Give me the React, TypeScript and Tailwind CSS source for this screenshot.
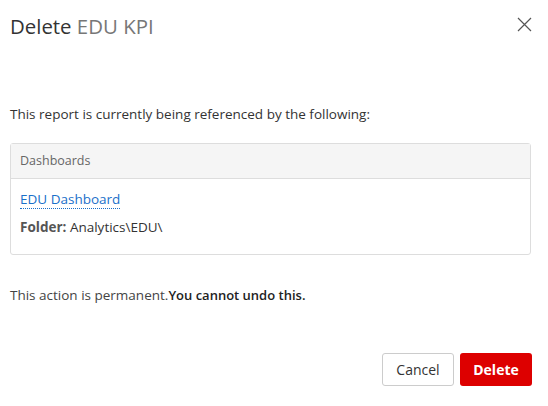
import React from 'react';

export default function App() {
  return (
    <div
      className="w-[548px] h-[406px] bg-white text-[#333] flex flex-col"
      style={{ fontFamily: '"Open Sans", sans-serif' }}
    >
      <div className="flex items-start justify-between pl-[10px] pr-[16px] pt-[12px]">
        <h2 className="text-[20.4px] leading-[28px] font-normal text-[#333]">
          Delete <span className="text-[#777]">EDU KPI</span>
        </h2>
        <button className="mt-[5px] text-[#555]" aria-label="Close">
          <svg width="15" height="15" viewBox="0 0 15 15" fill="none" stroke="currentColor" strokeWidth="1.2">
            <path d="M1 1L14 14M14 1L1 14" />
          </svg>
        </button>
      </div>

      <div className="pl-[10px] pr-[17px] mt-[64px]">
        <p className="text-[13.5px] leading-[20px] text-[#333]">
          This report is currently being referenced by the following:
        </p>

        <div className="mt-[19px] border border-[#ddd] rounded-[3px]">
          <div className="h-[35px] bg-[#f5f5f5] border-b border-[#ddd] px-[9px] flex items-center text-[12.5px] text-[#666]">
            Dashboards
          </div>
          <div className="px-[9px] pt-[10px] pb-[17px] text-[13.5px]">
            <a
              href="#"
              className="text-[#1a6fc9] leading-[20px] border-b border-dotted border-[#1a6fc9]"
            >
              EDU Dashboard
            </a>
            <div className="mt-[8px] leading-[20px] text-[#333]">
              <span className="font-bold text-[#555]">Folder:</span> Analytics\EDU\
            </div>
          </div>
        </div>

        <p className="mt-[30px] text-[13.5px] leading-[20px] text-[#444]">
          This action is permanent.
          <span className="font-semibold text-[13px] text-[#222]">You cannot undo this.</span>
        </p>
      </div>

      <div className="flex justify-end gap-[6px] px-[16px] mt-[48px]">
        <button className="h-[33px] w-[72px] border border-[#ccc] rounded-[3px] bg-white text-[14px] text-[#333]">
          Cancel
        </button>
        <button className="h-[33px] w-[72px] rounded-[3px] bg-[#dd0000] text-[14px] font-bold text-white">
          Delete
        </button>
      </div>
    </div>
  );
}
